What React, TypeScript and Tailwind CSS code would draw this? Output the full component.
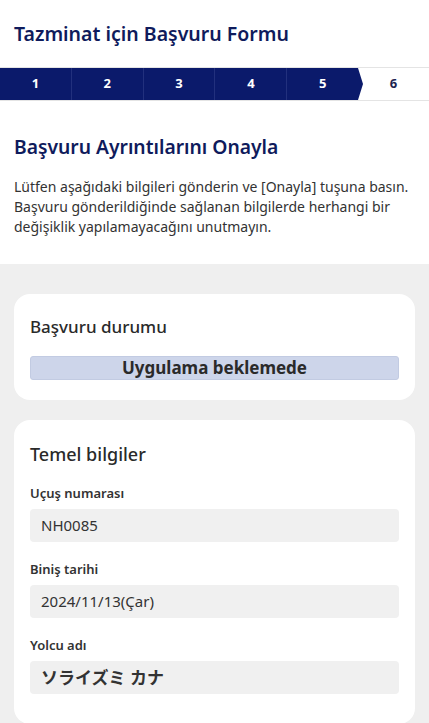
import React from "react";

const font = { fontFamily: '"Noto Sans", "Noto Sans CJK JP", sans-serif' };

function Field({ label, value, jp }: { label: string; value: string; jp?: boolean }) {
  return (
    <div className="flex flex-col">
      <div className="text-[13px] font-semibold text-[#333] leading-[18px] mb-[7px]">{label}</div>
      <div
        className={`h-[33px] rounded-[4px] bg-[#f0f0f0] flex items-center px-[11px] text-[#333] ${
          jp ? "text-[17px] font-semibold" : "text-[15px]"
        }`}
      >
        {value}
      </div>
    </div>
  );
}

export default function App() {
  const steps = ["1", "2", "3", "4", "5"];
  return (
    <div className="w-[429px] min-h-[723px] bg-[#efefef]" style={font}>
      <div className="bg-white">
        <div className="h-[67px] px-[14px] flex items-center">
          <h1 className="text-[19.5px] font-semibold text-[#0f1b5c] leading-none pt-[1px]">
            Tazminat için Başvuru Formu
          </h1>
        </div>
        <div className="h-[34px] border-y border-[#e4e4e4] flex">
          {steps.map((s, i) => (
            <div
              key={s}
              className={`relative flex-1 bg-[#0b1a6b] flex items-center justify-center text-white text-[13px] font-bold ${
                i < 4 ? "border-r border-[#22307d]" : ""
              } ${
                i === 4
                  ? "after:content-[''] after:absolute after:left-full after:top-0 after:border-y-[16px] after:border-l-[5px] after:border-y-transparent after:border-l-[#0b1a6b] after:z-10"
                  : ""
              }`}
            >
              {s}
            </div>
          ))}
          <div className="flex-1 flex items-center justify-center text-[#1c2550] text-[13px] font-bold">6</div>
        </div>
        <div className="px-[14px] pt-[33px] pb-[27px]">
          <h2 className="text-[19.3px] font-semibold text-[#0f1b5c] leading-[26px]">Başvuru Ayrıntılarını Onayla</h2>
          <p className="mt-[17px] text-[14px] leading-[20px] text-[#333]">
            Lütfen aşağıdaki bilgileri gönderin ve [Onayla] tuşuna basın. Başvuru gönderildiğinde sağlanan bilgilerde
            herhangi bir değişiklik yapılamayacağını unutmayın.
          </p>
        </div>
      </div>
      <div className="px-[14px] pt-[30px] flex flex-col gap-[20px]">
        <div className="bg-white rounded-[16px] px-[16px] pt-[21px] pb-[20px]">
          <div className="text-[17px] font-medium text-[#2a2a2a] leading-[24px]">Başvuru durumu</div>
          <div className="mt-[17px] h-[24px] rounded-[3px] border border-[#c2cbe2] bg-[#cdd5ea] flex items-center justify-center text-[17px] font-bold text-[#2a2a2a]">
            Uygulama beklemede
          </div>
        </div>
        <div className="bg-white rounded-[16px] px-[16px] pt-[22px] pb-[30px] flex flex-col gap-[18px]">
          <div className="text-[18px] font-medium text-[#2a2a2a] leading-[24px]">Temel bilgiler</div>
          <Field label="Uçuş numarası" value="NH0085" />
          <Field label="Biniş tarihi" value="2024/11/13(Çar)" />
          <Field label="Yolcu adı" value="ソライズミ カナ" jp />
        </div>
      </div>
    </div>
  );
}
